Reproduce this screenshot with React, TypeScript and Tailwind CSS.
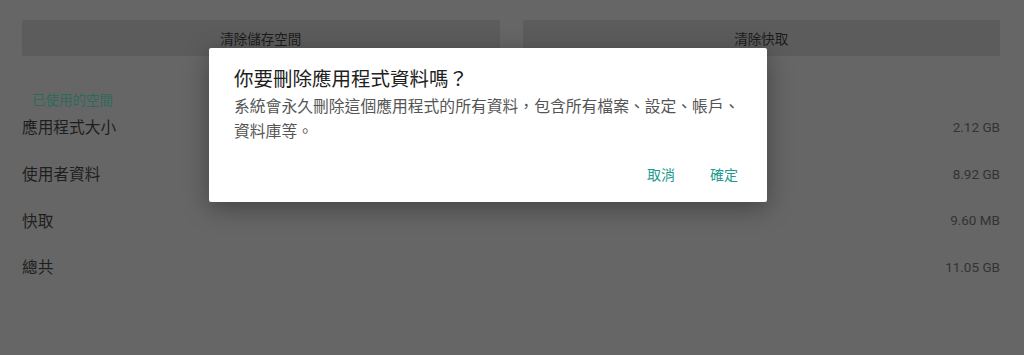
import React from "react";

const rows = [
  { label: "應用程式大小", value: "2.12 GB" },
  { label: "使用者資料", value: "8.92 GB" },
  { label: "快取", value: "9.60 MB" },
  { label: "總共", value: "11.05 GB" },
];

export default function App() {
  return (
    <div
      className="relative h-[355px] w-[1024px] overflow-hidden bg-[#666666]"
      style={{ fontFamily: '"Noto Sans CJK TC", Roboto, sans-serif' }}
    >
      <div className="flex flex-col pl-[22px] pr-[24px] pt-[20px]">
        <div className="flex gap-[23px]">
          <div className="flex h-[36px] flex-1 items-center justify-center rounded-[2px] bg-[#5c5c5c] text-[13.5px] text-[#1c1c1c]">
            清除儲存空間
          </div>
          <div className="flex h-[36px] flex-1 items-center justify-center rounded-[2px] bg-[#5c5c5c] text-[13.5px] text-[#1c1c1c]">
            清除快取
          </div>
        </div>
        <div className="mt-[34px] pl-[10px] text-[13.5px] leading-[18px] text-[#2e6a5c]">
          已使用的空間
        </div>
        <div className="mt-[9px] flex flex-col gap-[26.7px]">
          {rows.map((r) => (
            <div key={r.label} className="flex h-[20px] items-center justify-between">
              <span className="text-[15.7px] text-[#1e1e1e]">{r.label}</span>
              <span
                className="text-[13.5px] text-[#333333]"
                style={{ fontFamily: 'Roboto, "Noto Sans CJK TC", sans-serif' }}
              >
                {r.value}
              </span>
            </div>
          ))}
        </div>
      </div>

      <div className="absolute left-[209px] top-[48px] flex w-[558px] flex-col rounded-[2px] bg-white pb-[10px] pt-[18px] shadow-[0_6px_24px_rgba(0,0,0,0.35)]">
        <div className="pl-[25px] text-[19.5px] leading-[24px] text-[#212121]">
          你要刪除應用程式資料嗎？
        </div>
        <div className="mt-[3px] pl-[25px] pr-[20px] text-[15.8px] leading-[25px] text-[#555555]">
          系統會永久刪除這個應用程式的所有資料，包含所有檔案、設定、帳戶、資料庫等。
        </div>
        <div className="mt-[13px] flex h-[36px] items-center justify-end gap-[35px] pr-[29px] text-[14px] text-[#1e9a8e]">
          <span>取消</span>
          <span>確定</span>
        </div>
      </div>
    </div>
  );
}
